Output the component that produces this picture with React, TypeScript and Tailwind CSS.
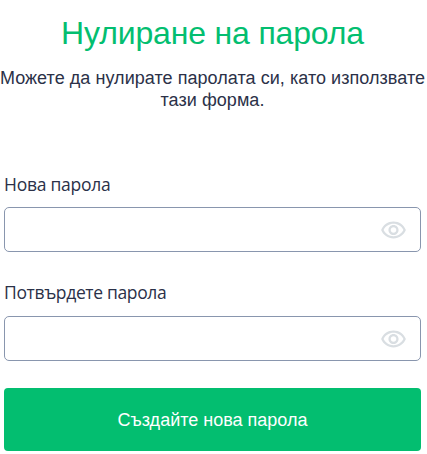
function EyeIcon() {
  return (
    <svg viewBox="0 0 24 24" className="mt-[1.5px] size-[27px] fill-[#d9dee2]" aria-hidden="true">
      <path d="M12 6c3.79 0 7.17 2.13 8.82 5.5C19.17 14.87 15.79 17 12 17s-7.17-2.13-8.82-5.5C4.83 8.13 8.21 6 12 6m0-2C7 4 2.73 7.11 1 11.5 2.73 15.89 7 19 12 19s9.27-3.11 11-7.5C21.27 7.11 17 4 12 4zm0 5c1.38 0 2.5 1.12 2.5 2.5S13.38 14 12 14s-2.5-1.12-2.5-2.5S10.62 9 12 9m0-2c-2.48 0-4.5 2.02-4.5 4.5S9.52 16 12 16s4.500-2.020 4.500-4.500S14.480 7 12 7z" />
    </svg>
  );
}

function PasswordField({ id, label, labelClass }: { id: string; label: string; labelClass: string }) {
  return (
    <div>
      <label
        htmlFor={id}
        className={`block whitespace-nowrap font-['Open_Sans','Noto_Sans',sans-serif] text-[17.5px] leading-6 text-[#2b3148] ${labelClass}`}
      >
        {label}
      </label>
      <div className="flex h-[45px] items-center rounded-[5px] border border-[#8996ae] pr-[13px] pt-px">
        <input id={id} type="password" className="h-full min-w-0 flex-1 px-4 outline-none" />
        <EyeIcon />
      </div>
    </div>
  );
}

export default function App() {
  return (
    <main className="h-[454px] w-[427px] overflow-hidden bg-white pt-[13px] font-['Liberation_Sans',Arial,sans-serif]">
      <header className="text-center">
        <h1 className="whitespace-nowrap pr-[2px] text-[32px] leading-10 tracking-[-0.16px] text-[#03be70]">
          Нулиране на парола
        </h1>
        <p className="-ml-1.5 -mr-1 mt-[14px] whitespace-nowrap text-[18px] leading-[22px] tracking-[0.05px] text-[#2b3148]">
          Можете да нулирате паролата си, като използвате
          <br />
          тази форма.
        </p>
      </header>
      <form className="ml-1 mt-[61px] w-[417px]">
        <div className="flex flex-col gap-7">
          <PasswordField id="new-password" label="Нова парола" labelClass="mb-[11px] tracking-[-0.25px]" />
          <PasswordField id="confirm-password" label="Потвърдете парола" labelClass="mb-3 tracking-[-0.35px]" />
        </div>
        <button
          type="button"
          className="mt-[27px] h-[63px] w-full rounded-[4px] bg-[#03be70] pt-0.5 text-[18px] text-white"
        >
          Създайте нова парола
        </button>
      </form>
    </main>
  );
}
